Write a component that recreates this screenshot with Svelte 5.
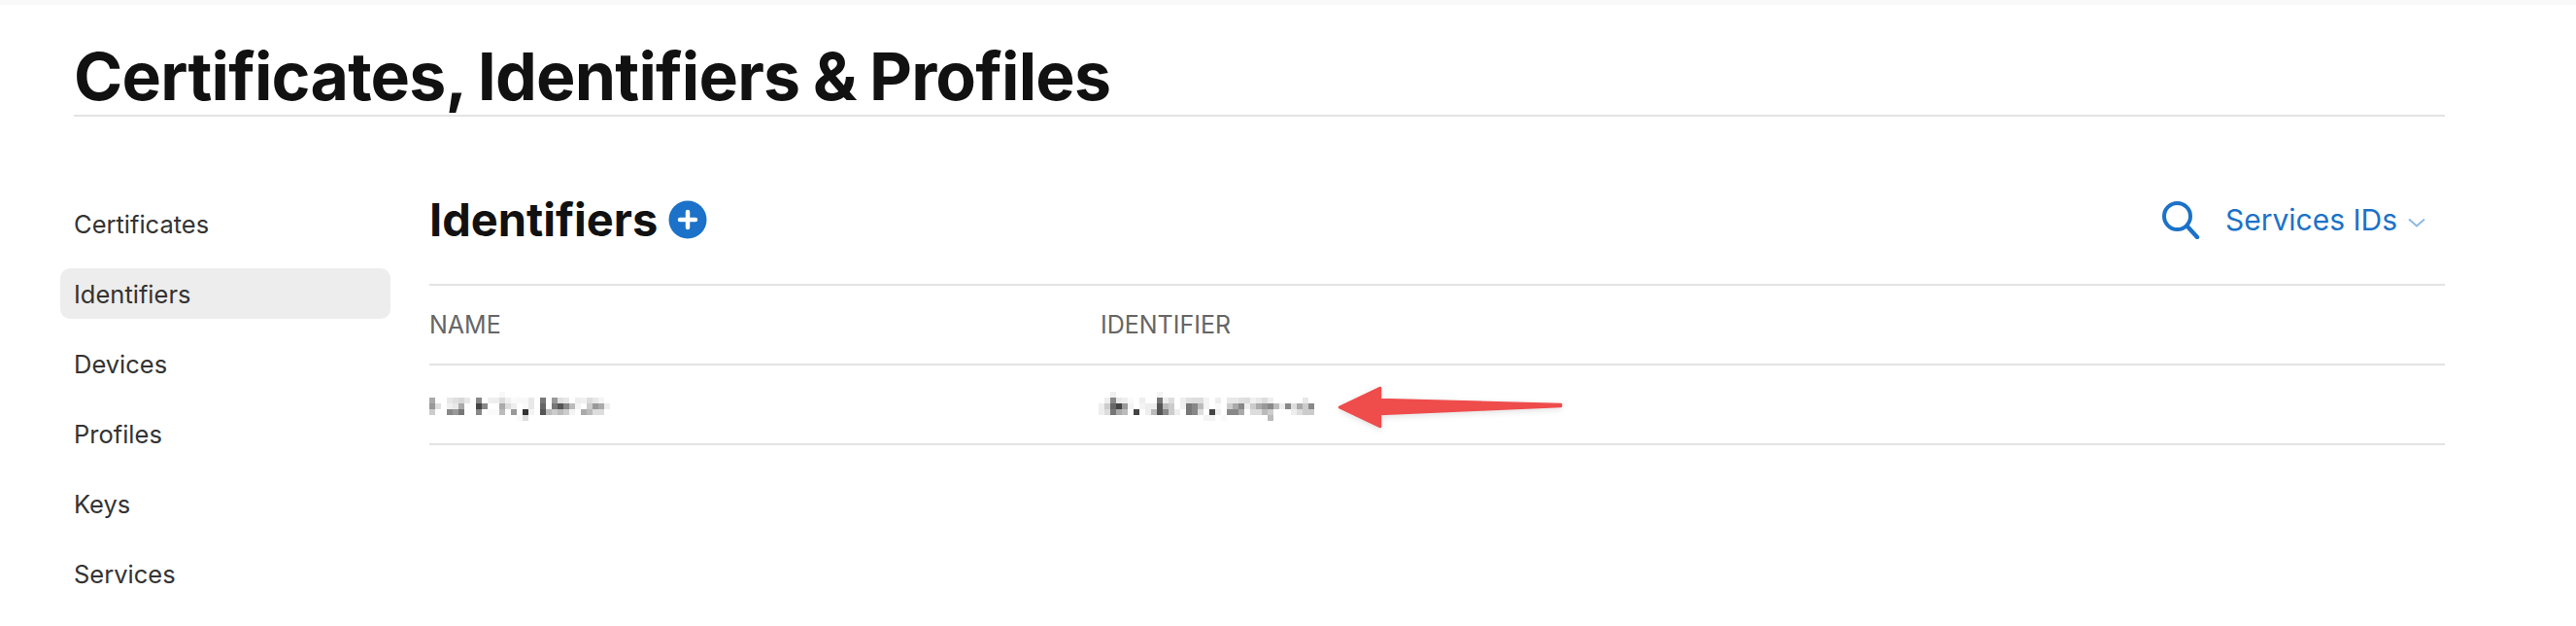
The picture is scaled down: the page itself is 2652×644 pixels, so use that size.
<script>
	const navItems = ['Certificates', 'Identifiers', 'Devices', 'Profiles', 'Keys', 'Services'];

	// pixelated (redacted) values: one string per row of 6px cells, "col:grey"
	const nameMosaic = [
		'12:f8',
		'0:aa 3:e8 4:e0 5:d8 6:e8 8:88 10:f0 11:ee 12:dd 13:f0 14:fa 15:f8 16:f8 17:e8 19:77 21:99 22:e0 23:e8 25:ee 26:f0 27:dd 28:e8 29:f4',
		'0:99 1:e0 3:f0 4:e8 5:aa 8:44 9:88 12:aa 13:dd 14:ee 16:fa 17:e8 19:66 21:77 22:55 23:88 24:bb 25:f4 27:cc 28:99 29:aa 30:ee',
		'0:cc 3:88 4:99 5:77 8:88 10:fa 11:fa 12:bb 14:99 16:33 17:f4 19:55 20:bb 21:cc 22:bb 23:cc 24:f4 26:aa 27:bb 28:dd 29:dd',
		'15:fa 16:dd'
	];
	const idMosaic = [
		'2:f0 10:f4',
		'1:ee 2:88 3:e8 4:ee 5:fa 7:ee 10:77 11:ee 12:dd 14:ee 15:e0 16:dd 17:dd 18:f4 20:ee 22:e8 23:e8 24:e0 25:dd 26:f0 27:e8 28:dd 29:ee 35:e8',
		'0:ee 1:cc 2:66 3:44 4:99 5:f4 7:f4 8:ee 9:ee 10:55 11:bb 12:cc 14:f0 15:77 16:88 17:bb 18:f4 20:fa 22:cc 23:aa 24:88 25:ee 26:cc 27:aa 28:99 29:88 30:bb 31:ee 32:88 33:dd 34:aa 35:cc 36:88',
		'0:ee 1:dd 2:77 3:aa 4:bb 6:44 8:ee 9:bb 10:55 11:88 12:cc 13:ee 15:77 16:88 17:dd 19:44 20:f0 22:88 23:88 24:aa 26:dd 27:dd 28:bb 29:cc 33:ee 34:dd 35:cc 36:cc',
		'18:f4 19:f4 21:fa 29:bb'
	];

	function cells(rows) {
		return rows.flatMap((row, y) =>
			row.split(' ').map((cell) => {
				const [x, grey] = cell.split(':');
				return { x: Number(x) * 6, y: y * 6, fill: `#${grey}${grey}${grey}` };
			})
		);
	}
</script>

<div class="topstrip"></div>
<div class="page">
	<h1 class="page-title">Certificates, Identifiers &amp; Profiles</h1>
	<div class="layout">
		<nav class="sidebar">
			{#each navItems as item}
				<a class={['nav-item', item === 'Identifiers' && 'nav-item--active']} href="#/">{item}</a>
			{/each}
		</nav>
		<main class="content">
			<header class="content-head">
				<div class="heading">
					<h2>Identifiers</h2>
					<svg class="add" viewBox="0 0 40 40" width="40" height="40">
						<circle cx="20" cy="20" r="19.5" fill="#1b72c8" />
						<path d="M20 12v16M12 20h16" stroke="#fff" stroke-width="4.5" stroke-linecap="round" />
					</svg>
				</div>
				<div class="tools">
					<svg class="search" viewBox="0 0 40 40" width="40" height="40">
						<circle cx="16.5" cy="16.5" r="13.5" fill="none" stroke="#1b72c8" stroke-width="4" />
						<path d="M27 27L37 38" stroke="#1b72c8" stroke-width="4.4" stroke-linecap="round" />
					</svg>
					<span class="filter">Services IDs</span>
					<svg class="chev" viewBox="0 0 18 10" width="18" height="10">
						<path d="M1 1.5L9 8.5l8-7" fill="none" stroke="#8fb9e4" stroke-width="2" />
					</svg>
				</div>
			</header>
			<div class="row row--head">
				<span>NAME</span>
				<span>IDENTIFIER</span>
			</div>
			<div class="row row--body">
				<svg class="mosaic" width="186" height="36" shape-rendering="crispEdges">
					{#each cells(nameMosaic) as c}
						<rect x={c.x} y={c.y} width="6" height="6" fill={c.fill} />
					{/each}
				</svg>
				<svg class="mosaic mosaic--id" width="222" height="36" shape-rendering="crispEdges">
					{#each cells(idMosaic) as c}
						<rect x={c.x} y={c.y} width="6" height="6" fill={c.fill} />
					{/each}
				</svg>
				<svg class="arrow" viewBox="0 0 240 52" width="240" height="52">
					<path
						d="M5 25L47 5V17L233 22V24L47 32V45Z"
						fill="#ef4c4c"
						stroke="#ef4c4c"
						stroke-width="2.5"
						stroke-linejoin="round"
					/>
				</svg>
			</div>
		</main>
	</div>
</div>

<style>
	:global(body) {
		background: #fff;
		font-family: Inter, 'Liberation Sans', sans-serif;
		overflow: hidden;
	}

	.topstrip {
		background: #f9f9f9;
		height: 5px;
	}

	.page {
		padding: 0 135px 0 76px;
	}

	.page-title {
		border-bottom: 2px solid #e3e3e3;
		color: #111;
		font-size: 68px;
		font-weight: 700;
		letter-spacing: -0.8px;
		line-height: 79px;
		margin: 34px 0 0;
		word-spacing: -2px;
	}

	.layout {
		display: flex;
		margin-top: 84px;
	}

	.sidebar {
		display: flex;
		flex-direction: column;
		flex: 0 0 340px;
		margin-left: -14px;
		padding-right: 40px;
	}

	.nav-item {
		align-items: center;
		border-radius: 10px;
		color: #333;
		display: flex;
		font-size: 25.5px;
		height: 52px;
		margin-bottom: 20px;
		padding-left: 14px;
		text-decoration: none;
	}

	.nav-item--active {
		background: #ededed;
	}

	.content {
		flex: 1;
		min-width: 0;
	}

	.content-head {
		align-items: flex-start;
		display: flex;
		height: 88px;
		justify-content: space-between;
	}

	.heading {
		align-items: center;
		display: flex;
		gap: 11px;
		margin-top: 1px;
	}

	.heading h2 {
		color: #111;
		font-size: 47px;
		font-weight: 700;
		line-height: 42px;
		margin: 0;
	}

	.tools {
		align-items: center;
		color: #1b72c8;
		display: flex;
		font-size: 30px;
		height: 42px;
		margin-top: 1px;
		padding-right: 20px;
	}

	.filter {
		margin-left: 26px;
	}

	.chev {
		margin-left: 11px;
		margin-top: 5px;
	}

	.row {
		align-items: center;
		border-top: 2px solid #e3e3e3;
		display: grid;
		grid-template-columns: 691px 1fr;
		height: 80px;
		position: relative;
	}

	.row--body {
		border-bottom: 2px solid #e3e3e3;
	}

	.row--head {
		color: #666;
		font-size: 25px;
	}

	.mosaic {
		align-self: start;
		margin-top: 27px;
	}

	.mosaic--id {
		margin-left: -2px;
	}

	.arrow {
		filter: drop-shadow(0 2px 3px rgba(0, 0, 0, 0.12));
		left: 932px;
		position: absolute;
		top: 18px;
	}
</style>
